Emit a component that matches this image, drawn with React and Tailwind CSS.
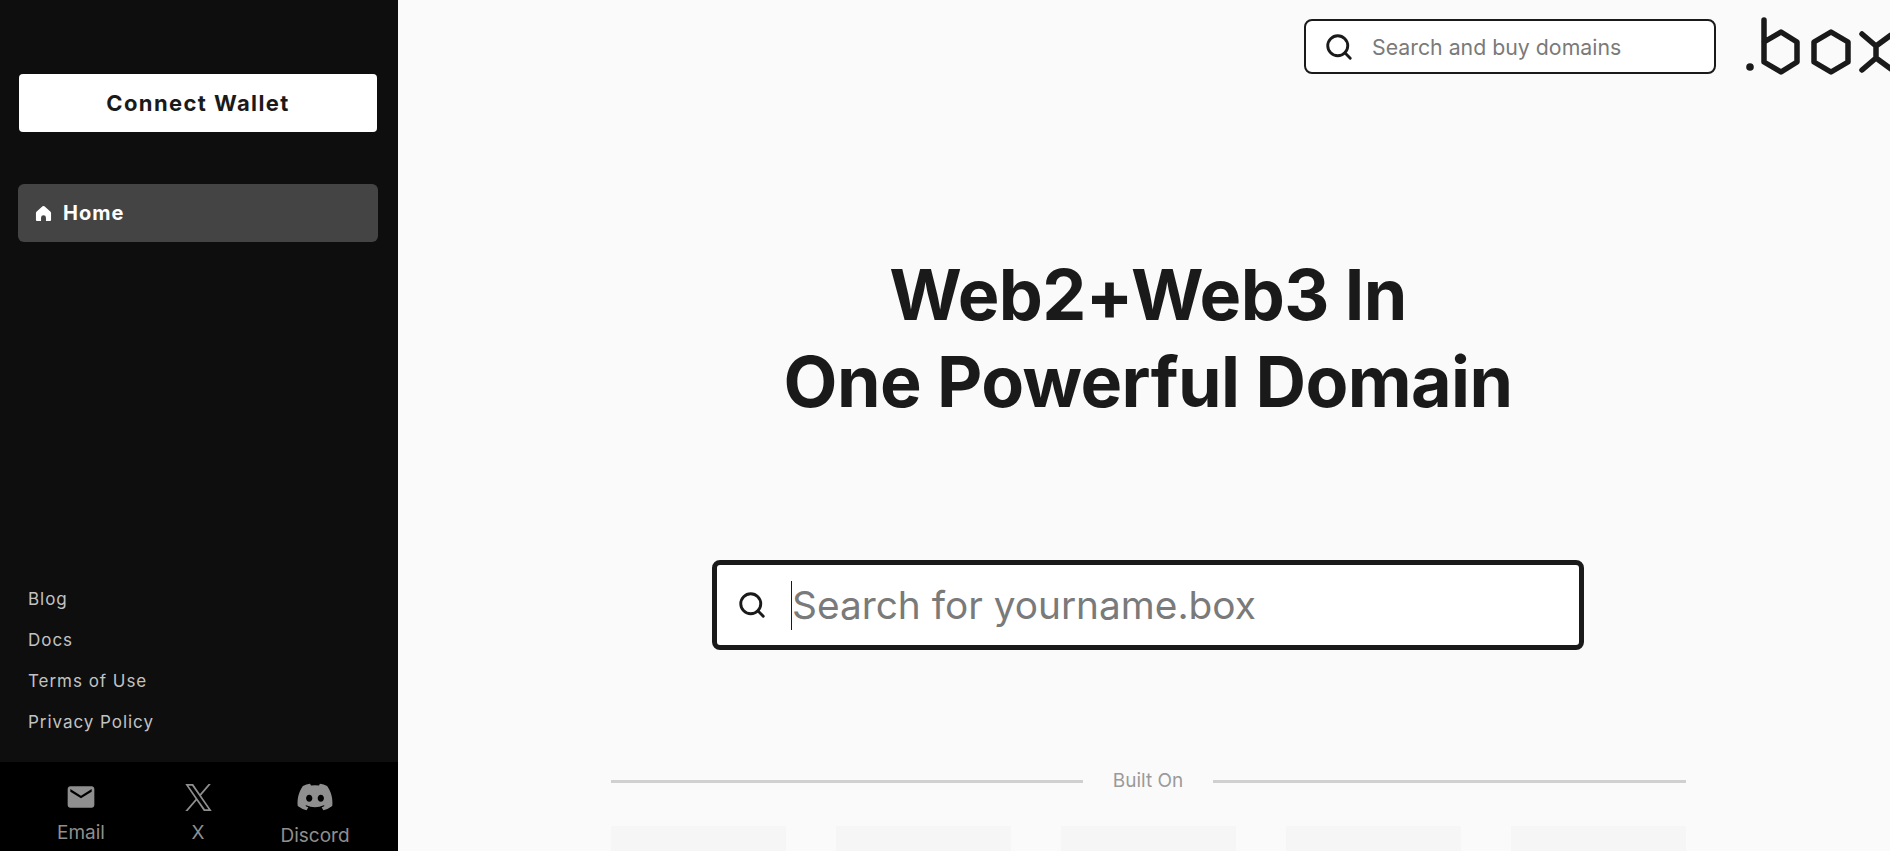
import React from "react";
import { Search } from "lucide-react";
import { FaDiscord } from "react-icons/fa";
import { MdEmail } from "react-icons/md";

const footerLinks = ["Blog", "Docs", "Terms of Use", "Privacy Policy"];

function HomeIcon() {
  return (
    <svg width="17" height="17" viewBox="0 0 18 18" className="shrink-0">
      <path
        fill="#fff"
        fillRule="evenodd"
        d="M8 1.4a1.6 1.6 0 0 1 2 0l6.2 5.4c.5.4.8 1 .8 1.700V16a1 1 0 0 1-1 1h-4.400v-3.600a2.600 2.600 0 0 0-5.200 0V17H2a1 1 0 0 1-1-1V8.500c0-.7.3-1.300.8-1.700z"
      />
    </svg>
  );
}

function XIcon() {
  return (
    <svg width="27" height="27" viewBox="0 0 1200 1227" fill="currentColor">
      <path d="M714.163 519.284L1160.89 0H1055.03L667.137 450.887L357.328 0H0L468.492 681.821L0 1226.37H105.866L515.491 750.218L842.672 1226.37H1200L714.137 519.284H714.163ZM569.165 687.828L521.697 619.934L144.011 79.694H306.615L611.412 515.685L658.88 583.579L1055.08 1150.3H892.476L569.165 687.854V687.828Z" />
    </svg>
  );
}

function BoxLogo() {
  return (
    <svg width="146" height="62" viewBox="1745 15 146 62" className="shrink-0 text-[#1a1a1a]" fill="none" stroke="currentColor" strokeWidth="5.500" strokeLinecap="round" strokeLinejoin="round">
      <circle cx="1750" cy="67" r="3.800" fill="currentColor" stroke="none" />
      <path d="M1764 20V62L1781 72L1797 62V42L1781 32L1764 42" />
      <path d="M1831 32L1848 42V62L1831 72L1814 62V42Z" />
      <path d="M1862 34L1876 46V58L1862 70M1876 46L1891 35M1876 58L1891 69" />
    </svg>
  );
}

function SocialLink({ icon, label, labelClass }) {
  return (
    <div className="flex w-[117px] flex-col items-center text-[#8f8f8f]">
      <div className="flex h-[30px] items-center justify-center">{icon}</div>
      <span className={`text-[19px] leading-[22px] ${labelClass}`}>{label}</span>
    </div>
  );
}

export default function App() {
  return (
    <div className="flex h-screen overflow-hidden bg-[#fafafa] font-['Inter',sans-serif]">
      <aside className="flex w-[398px] shrink-0 flex-col bg-[#0e0e0e]">
        <div className="px-[19px] pt-[74px]">
          <button className="h-[58px] w-[358px] rounded bg-white text-[22px] font-bold tracking-[1.4px] text-[#1a1a1a]">
            Connect Wallet
          </button>
        </div>
        <div className="mt-[52px] px-[18px]">
          <div className="flex h-[58px] w-[360px] items-center gap-[11px] rounded-md bg-[#444444] pl-[17px] text-[20px] font-bold tracking-[1px] text-white">
            <HomeIcon />
            Home
          </div>
        </div>
        <nav className="mt-auto flex flex-col gap-[19px] pb-[29px] pl-[28px] text-[17px] leading-[22px] tracking-[0.96px] text-[#c2c2c2]">
          {footerLinks.map((link) => (
            <a key={link}>{link}</a>
          ))}
        </nav>
        <div className="flex h-[89px] items-start justify-center bg-black pr-[2px] pt-[20px]">
          <SocialLink icon={<MdEmail size={32} />} label="Email" labelClass="mt-[10px]" />
          <SocialLink icon={<XIcon />} label="X" labelClass="mt-[10px]" />
          <SocialLink icon={<FaDiscord size={38} />} label="Discord" labelClass="mt-[13px]" />
        </div>
      </aside>

      <main className="flex min-w-0 flex-1 flex-col overflow-hidden pl-[8px]">
        <header className="-mr-px flex items-start justify-end gap-[29px] pt-[19px]">
          <div className="flex h-[55px] w-[412px] items-center rounded-lg border-2 border-[#1a1a1a] bg-white pl-[18px]">
            <Search size={30} strokeWidth={2.300} className="shrink-0 text-[#1a1a1a]" />
            <span className="ml-[18px] pt-[2px] text-[21.3px] text-[#7a7a7a]">Search and buy domains</span>
          </div>
          <div className="-mt-[4px]">
            <BoxLogo />
          </div>
        </header>

        <h1 className="mt-[174px] text-center text-[70px] leading-[87px] font-bold tracking-[-0.6px] text-[#1a1a1a]">
          Web2+Web3 In
          <br />
          One Powerful Domain
        </h1>

        <div className="mt-[135px] flex justify-center">
          <div className="flex h-[90px] w-[872px] items-center rounded-lg border-[5px] border-[#1a1a1a] bg-white pl-[20px]">
            <Search size={30} strokeWidth={2.300} className="shrink-0 text-[#1a1a1a]" />
            <span className="ml-[24px] h-[49px] w-px shrink-0 bg-[#1a1a1a]" />
            <span className="text-[38.8px] text-[#7a7a7a]">Search for yourname.box</span>
          </div>
        </div>

        <div className="mt-[118px] flex flex-col items-center">
          <div className="flex w-[1075px] items-center">
            <div className="h-[3px] flex-1 bg-[#d0d0d0]" />
            <span className="px-[30px] text-[19px] leading-[26px] text-[#9a9a9a]">Built On</span>
            <div className="h-[3px] flex-1 bg-[#d0d0d0]" />
          </div>
          <div className="mt-[32px] flex w-[1075px] justify-between">
            {[1, 2, 3, 4, 5].map((n) => (
              <div key={n} className="h-[100px] w-[175px] bg-[#f6f6f6]" />
            ))}
          </div>
        </div>
      </main>
    </div>
  );
}
